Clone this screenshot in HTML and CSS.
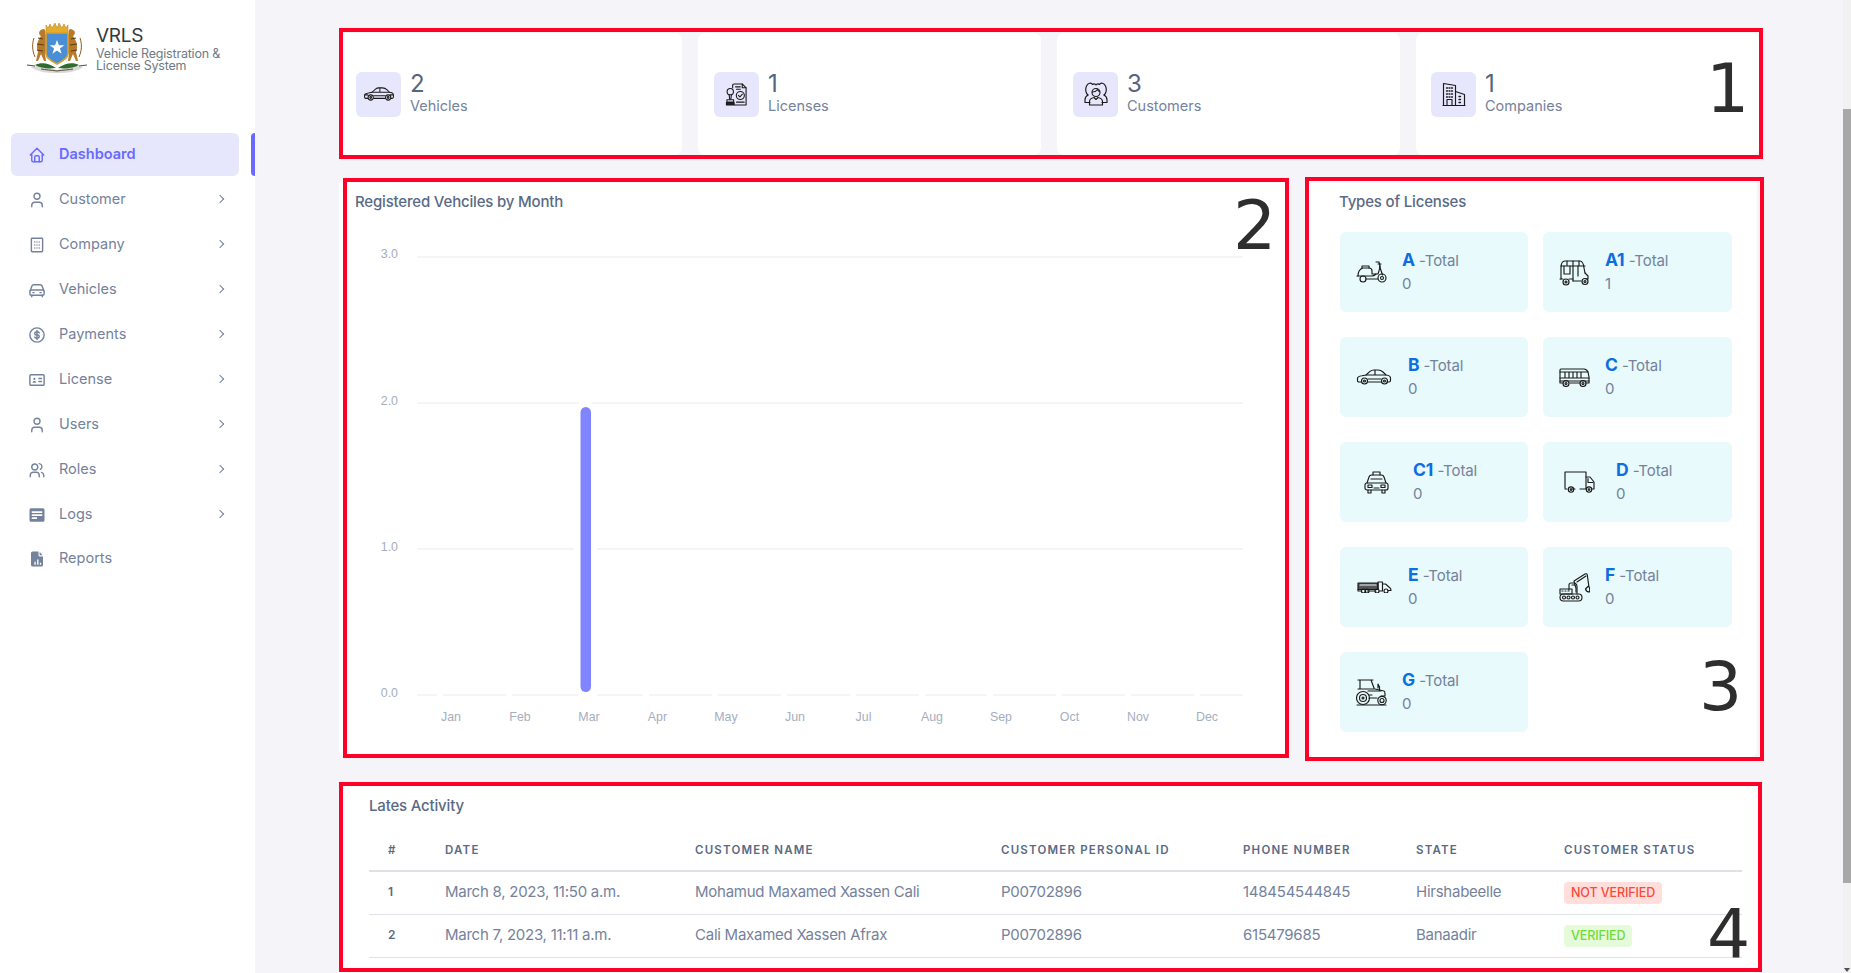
FILE: index.html
```html
<!DOCTYPE html>
<html lang="en">
<head>
<meta charset="utf-8">
<title>VRLS Dashboard</title>
<link rel="stylesheet" href="styles.css">
</head>
<body>
<div class="app">
  <aside class="sidebar">
    <div class="brand">
      <svg class="crest" viewBox="0 0 60 52" width="60" height="52">
        <path d="M4 45c8-3 16 1 26 3c10-2 18-6 26-3c-6 5-16 6-26 6s-20-1-26-6z" fill="#d9d9d6"/>
        <path d="M8 43c6-3 14-2 21 3c-8 1-16 0-21-3zM52 43c-6-3-14-2-21 3c8 1 16 0 21-3z" fill="#2f6b2c"/>
        <path d="M0 43l8 1M60 43l-8 1M14 47c5 1 10 1 16 2c6-1 11-1 16-2" stroke="#5a4a3a" stroke-width="1" fill="none"/>
        <path d="M14 14c-3-2-2-5 0-6l2-1c2 0 3 2 2 4c2 3 2 8 1 12c2 2 1 6-1 9l1 7h-2l-3-7l-3 7H9l2-9c-2-5-1-11 3-16z" fill="#b77a2a"/>
        <path d="M46 14c3-2 2-5 0-6l-2-1c-2 0-3 2-2 4c-2 3-2 8-1 12c-2 2-1 6 1 9l-1 7h2l3-7l3 7h2l-2-9c2-5 1-11-3-16z" fill="#b77a2a"/>
        <path d="M11 16l5 1M10 22l7 1M10 28l6 1M49 16l-5 1M50 22l-7 1M50 28l-6 1" stroke="#5b3a14" stroke-width="1"/>
        <path d="M7 16c-2 6-2 12 1 19M53 16c2 6 2 12-1 19" stroke="#8a5a1e" stroke-width="1" fill="none"/>
        <path d="M19 3l2 3l2-4l2 4l3-5l2 5l2-5l3 5l2-4l2 4l2-3v8H19z" fill="#e5ad2e" stroke="#b07d18" stroke-width=".5"/>
        <path d="M19 11h22v21c0 4-5 7-11 10c-6-3-11-6-11-10z" fill="#4a8fd6" stroke="#dca12a" stroke-width="1.6"/>
        <path d="M30 18l1.900 5.200h5.400l-4.400 3.200l1.700 5.300l-4.600-3.200l-4.600 3.200l1.700-5.300l-4.400-3.200h5.400z" fill="#fff"/>
      </svg>
      <div class="brand-text">
        <div class="brand-name">VRLS</div>
        <div class="brand-sub">Vehicle Registration &amp;<br>License System</div>
      </div>
    </div>
    <nav class="nav">
      <a class="nav-item is-active">
        <svg class="nav-icon" viewBox="0 0 24 24"><path d="M5 12H3l9-9l9 9h-2"/><path d="M5 12v7a2 2 0 0 0 2 2h10a2 2 0 0 0 2-2v-7"/><path d="M9 21v-6a2 2 0 0 1 2-2h2a2 2 0 0 1 2 2v6"/></svg>
        <span>Dashboard</span>
      </a>
      <a class="nav-item">
        <svg class="nav-icon" viewBox="0 0 24 24"><circle cx="12" cy="7" r="4"/><path d="M5 21v-2a4 4 0 0 1 4-4h6a4 4 0 0 1 4 4v2" /></svg>
        <span>Customer</span><i class="chev"></i>
      </a>
      <a class="nav-item">
        <svg class="nav-icon" viewBox="0 0 24 24"><rect x="4.500" y="3" width="15" height="18" rx="1"/><path d="M9 8h.01M12 8h.01M15 8h.01M9 12h.01M12 12h.01M15 12h.01M9 16h.01M12 16h.01M15 16h.01"/></svg>
        <span>Company</span><i class="chev"></i>
      </a>
      <a class="nav-item">
        <svg class="nav-icon" viewBox="0 0 24 24"><path d="M3 13l2.200-6.200A2.500 2.500 0 0 1 7.600 5h8.800a2.500 2.500 0 0 1 2.400 1.800L21 13"/><rect x="2.500" y="12" width="19" height="7" rx="2"/><path d="M5 19v2M19 19v2M6.500 15.500h1.500M16 15.500h1.500"/></svg>
        <span>Vehicles</span><i class="chev"></i>
      </a>
      <a class="nav-item">
        <svg class="nav-icon" viewBox="0 0 24 24"><circle cx="12" cy="12" r="9.500"/><path d="M15 9.200A2.200 2.200 0 0 0 13 8h-2a2 2 0 0 0 0 4h2a2 2 0 0 1 0 4h-2a2.200 2.200 0 0 1-2-1.200M12 6v12"/></svg>
        <span>Payments</span><i class="chev"></i>
      </a>
      <a class="nav-item">
        <svg class="nav-icon" viewBox="0 0 24 24"><rect x="2.500" y="5" width="19" height="14" rx="1.500"/><circle cx="8.500" cy="10.500" r="1.400" class="solid"/><path d="M6 15.500c.3-1.600 1.300-2.200 2.500-2.200s2.200.6 2.500 2.200z" class="solid"/><path d="M14.500 10h3.500M14.500 14h3.500"/></svg>
        <span>License</span><i class="chev"></i>
      </a>
      <a class="nav-item">
        <svg class="nav-icon" viewBox="0 0 24 24"><circle cx="12" cy="7" r="4"/><path d="M5 21v-2a4 4 0 0 1 4-4h6a4 4 0 0 1 4 4v2"/></svg>
        <span>Users</span><i class="chev"></i>
      </a>
      <a class="nav-item">
        <svg class="nav-icon" viewBox="0 0 24 24"><circle cx="9" cy="8" r="4"/><path d="M3 21v-2a4 4 0 0 1 4-4h4a4 4 0 0 1 4 4v2M15 3.500a4 4 0 0 1 1.500 7.500M21 21v-2a4 4 0 0 0-3-3.800"/></svg>
        <span>Roles</span><i class="chev"></i>
      </a>
      <a class="nav-item">
        <svg class="nav-icon nav-icon-fill" viewBox="0 0 24 24"><path d="M4 3h16a2 2 0 0 1 2 2v14a2 2 0 0 1-2 2H4a2 2 0 0 1-2-2V5a2 2 0 0 1 2-2zm1 4v2.200h14V7zm0 4v2.200h14V11zm0 4v2.200h7V15z" fill-rule="evenodd"/></svg>
        <span>Logs</span><i class="chev"></i>
      </a>
      <a class="nav-item nav-item-last">
        <svg class="nav-icon nav-icon-fill" viewBox="0 0 24 24"><path d="M6 2h8v5a1.500 1.500 0 0 0 1.500 1.500H20V20a2 2 0 0 1-2 2H6a2 2 0 0 1-2-2V4a2 2 0 0 1 2-2zm2.500 17.500h1.800v-4H8.500zm3.700 0H14v-7h-1.800zm3.600 0h1.800v-2.500h-1.800zM15.500 2.500L19.500 7h-4z" fill-rule="evenodd"/></svg>
        <span>Reports</span>
      </a>
    </nav>
  </aside>

  <main class="main">
    <section class="stats">
      <div class="stat">
        <div class="stat-icon">
          <svg class="line" viewBox="0 0 36 16" width="32" height="14"><path d="M5 13H3c-1 0-1.500-.5-1.500-1.500V9.500C1.500 8 3 7.200 6 6.800l4-.8l4-3.600C15 1.500 16.500 1 18 1h4c2 0 3.500.6 5 2l3 3c3 .3 4.500 1.300 4.500 3v2.500c0 1-.5 1.500-1.500 1.500h-2"/><path d="M12 10h13M12 13h13M10 6h20M19 1.200V6M2 9h3M31 9h3"/><circle cx="8.500" cy="12" r="3"/><circle cx="28.500" cy="12" r="3"/><circle cx="8.500" cy="12" r="1"/><circle cx="28.500" cy="12" r="1"/></svg>
        </div>
        <div class="stat-text"><div class="stat-num">2</div><div class="stat-label">Vehicles</div></div>
      </div>
      <div class="stat">
        <div class="stat-icon">
          <svg class="line" viewBox="0 0 24 26" width="23" height="25"><path d="M8 6V3.500C8 2.700 8.500 2 9.500 2H18l4 4v18H10"/><path d="M18 2v4h4M11 5h5M12 7.500h4"/><circle cx="16" cy="14" r="4.200"/><path d="M14 14l1.500 1.600l2.600-3"/><circle cx="5.500" cy="10" r="3.300"/><path d="M4.300 13l.6 5M6.700 13l-.6 5"/><path d="M2 18.500h7v2.500H2z"/><path d="M1.500 21.500h8v2.500h-8z" fill="#222"/><path d="M12 21h8"/></svg>
        </div>
        <div class="stat-text"><div class="stat-num">1</div><div class="stat-label">Licenses</div></div>
      </div>
      <div class="stat">
        <div class="stat-icon">
          <svg class="line" viewBox="0 0 26 26" width="26" height="26"><path d="M5 14C2.500 12 2 8 3.500 5S8 1 9.500 3.500C10.500 2.500 12 2.500 13 4c1-1.500 2.500-1.500 3.500-.5C18 1 21 2 22.500 5s1 7-1.500 9"/><circle cx="13" cy="11.500" r="4"/><path d="M9.500 11c2 0 4-1 5-2.500c.5 1 1.500 2 2 2"/><path d="M5 14c-2 1-3 2.500-3 5v2.500h5M21 14c2 1 3 2.500 3 5v2.500h-5"/><path d="M6.500 24v-3.500c0-2.500 2-3.500 4.500-4l2 2l2-2c2.500.5 4.500 1.500 4.500 4V24z"/></svg>
        </div>
        <div class="stat-text"><div class="stat-num">3</div><div class="stat-label">Customers</div></div>
      </div>
      <div class="stat">
        <div class="stat-icon">
          <svg class="line" viewBox="0 0 24 24" width="24" height="24"><path d="M1.500 23.500V1.500l12 2v20z"/><path d="M13.500 9.500l9 3v11h-9"/><path d="M1 23.500h22M5 23.500v-6h5v6"/><path d="M4.500 6h1M7 6h1M9.500 6h1M4.500 9h1M7 9h1M9.500 9h1M4.500 12h1M7 12h1M9.500 12h1M4.500 15h1M7 15h1M9.500 15h1M17 14.500h1.500M17 17.500h1.500M17 20.500h1.500" stroke-width="1.300"/></svg>
        </div>
        <div class="stat-text"><div class="stat-num">1</div><div class="stat-label">Companies</div></div>
      </div>
    </section>

    <section class="middle">
      <div class="panel chart-panel">
        <h2 class="panel-title">Registered Vehciles by Month</h2>
        <svg class="chart" viewBox="339 222 948 520" width="948" height="520">
          <g class="grid">
            <line x1="417" x2="1243" y1="257" y2="257"/>
            <line x1="417" x2="1243" y1="403" y2="403"/>
            <line x1="417" x2="1243" y1="549" y2="549"/>
            <line x1="417" x2="1243" y1="695" y2="695"/>
          </g>
          <g class="gaps">
            <rect x="437" y="693" width="6" height="4"/><rect x="506" y="693" width="6" height="4"/>
            <rect x="643" y="693" width="6" height="4"/><rect x="712" y="693" width="6" height="4"/>
            <rect x="781" y="693" width="6" height="4"/><rect x="850" y="693" width="6" height="4"/>
            <rect x="919" y="693" width="6" height="4"/><rect x="987" y="693" width="6" height="4"/>
            <rect x="1056" y="693" width="6" height="4"/><rect x="1125" y="693" width="6" height="4"/>
            <rect x="1194" y="693" width="6" height="4"/>
            <rect x="578" y="693" width="19" height="4"/><rect x="574" y="547" width="23" height="4"/>
            <rect x="579" y="401" width="13" height="4"/>
          </g>
          <rect class="bar" x="580.500" y="407" width="10.500" height="285" rx="5.250"/>
          <g class="y-labels">
            <text x="398" y="258">3.0</text>
            <text x="398" y="405">2.0</text>
            <text x="398" y="551">1.0</text>
            <text x="398" y="697">0.0</text>
          </g>
          <g class="x-labels">
            <text x="451" y="721">Jan</text><text x="520" y="721">Feb</text><text x="589" y="721">Mar</text>
            <text x="657.500" y="721">Apr</text><text x="726" y="721">May</text><text x="795" y="721">Jun</text>
            <text x="863.500" y="721">Jul</text><text x="932" y="721">Aug</text><text x="1001" y="721">Sep</text>
            <text x="1069.500" y="721">Oct</text><text x="1138" y="721">Nov</text><text x="1207" y="721">Dec</text>
          </g>
        </svg>
      </div>

      <div class="panel types-panel">
        <h2 class="panel-title">Types of Licenses</h2>
        <div class="tiles">
          <div class="tile">
            <div class="slot s31"><svg class="line" viewBox="0 0 31 22" width="31" height="22"><path d="M20 1h3l1 4M22 3h3M23.500 5l3 9"/><path d="M2 15c0-4 1.500-7 5-8h6c2 0 3 1 3 3v3h6c1-3 2-6 2-8"/><path d="M6 7V5h7v2M1 15h15c1.500 0 3-1 4-2"/><circle cx="7" cy="18" r="3"/><circle cx="26" cy="17" r="4"/><circle cx="26" cy="17" r="1.500"/><path d="M10 18h12"/></svg></div>
            <div class="tile-text"><div class="tile-head"><b>A</b> -Total</div><div class="tile-val">0</div></div>
          </div>
          <div class="tile">
            <div class="slot s31"><svg class="line" viewBox="0 0 31 27" width="31" height="27"><path d="M2 20V9c0-4 1-7 4-7h15c2.500 0 3.500 2.500 4 7l1 5"/><path d="M2 7h24M8 2v5M14 2v20M20 2v5"/><path d="M5 7v8h6V7M19 7v10"/><path d="M1 20h3M10 20h4M14 22h8M26 14l3 3v3h-2"/><circle cx="7" cy="23" r="3"/><circle cx="26" cy="22.500" r="3"/><circle cx="7" cy="23" r="1"/><circle cx="26" cy="22.500" r="1"/></svg></div>
            <div class="tile-text"><div class="tile-head"><b>A1</b> -Total</div><div class="tile-val">1</div></div>
          </div>
          <div class="tile">
            <div class="slot s36"><svg class="line" viewBox="0 0 36 16" width="36" height="16"><path d="M5 13H3c-1 0-1.500-.5-1.500-1.500V9.500C1.500 8 3 7.200 6 6.800l4-.8l4-3.600C15 1.500 16.500 1 18 1h4c2 0 3.500.6 5 2l3 3c3 .3 4.500 1.300 4.500 3v2.500c0 1-.5 1.500-1.500 1.500h-2"/><path d="M12 10h13M12 13h13M10 6h20M19 1.200V6"/><circle cx="8.500" cy="12" r="3"/><circle cx="28.500" cy="12" r="3"/><circle cx="8.500" cy="12" r="1"/><circle cx="28.500" cy="12" r="1"/></svg></div>
            <div class="tile-text"><div class="tile-head"><b>B</b> -Total</div><div class="tile-val">0</div></div>
          </div>
          <div class="tile">
            <div class="slot s31"><svg class="line" viewBox="0 0 31 19" width="31" height="19"><path d="M4 15H1V2c0-.6.4-1 1-1h23c2 0 3 1 4 3l1 5v6h-3M11 15h10"/><path d="M1 4h28M1 10h29M1 13h29M6 4v6M10 4v6M14 4v6M18 4v6M22 4v6"/><circle cx="7" cy="15.500" r="3"/><circle cx="24" cy="15.500" r="3"/><circle cx="7" cy="15.500" r="1"/><circle cx="24" cy="15.500" r="1"/></svg></div>
            <div class="tile-text"><div class="tile-head"><b>C</b> -Total</div><div class="tile-val">0</div></div>
          </div>
          <div class="tile">
            <div class="slot s41"><svg class="line" viewBox="0 0 25 23" width="25" height="23"><path d="M9 4V1h7v3"/><path d="M3 12l2-6c.4-1.200 1-2 2.500-2h10c1.500 0 2.100.8 2.500 2l2 6"/><rect x="1" y="12" width="23" height="7" rx="2"/><rect x="4" y="14" width="4" height="2.500"/><rect x="17" y="14" width="4" height="2.500"/><path d="M10 17h5M4 19v3h3v-3M18 19v3h3v-3M7 8h11"/></svg></div>
            <div class="tile-text"><div class="tile-head"><b>C1</b> -Total</div><div class="tile-val">0</div></div>
          </div>
          <div class="tile">
            <div class="slot s41"><svg class="line" viewBox="0 0 31 22" width="31" height="22"><path d="M1 17V1h21v17h-6M3 18H1M8 18h3"/><path d="M22 6h4l4 5v7h-2"/><path d="M24 7.500v4h5"/><circle cx="7" cy="18.500" r="2.700"/><circle cx="25" cy="18.500" r="2.700"/><circle cx="7" cy="18.500" r=".8"/><circle cx="25" cy="18.500" r=".8"/></svg></div>
            <div class="tile-text"><div class="tile-head"><b>D</b> -Total</div><div class="tile-val">0</div></div>
          </div>
          <div class="tile">
            <div class="slot s36"><svg class="line" viewBox="0 0 35 12" width="35" height="12"><path d="M1 2h20v6.500H1z" fill="#555"/><path d="M1 8.500v1.500h3M10 10h9M22.500 10H25M21 8.500V1h4.500v9"/><path d="M25.500 3h3l4 3.500c1 .5 1.500 1.500 1.500 3h-3"/><path d="M3 4h16" stroke="#e8fafb"/><circle cx="6.500" cy="10" r="2"/><circle cx="10" cy="10" r="2"/><circle cx="20" cy="10" r="2"/><circle cx="29" cy="10" r="2"/></svg></div>
            <div class="tile-text"><div class="tile-head"><b>E</b> -Total</div><div class="tile-val">0</div></div>
          </div>
          <div class="tile">
            <div class="slot s31"><svg class="line" viewBox="0 0 31 30" width="31" height="30"><path d="M16 13l-1-4l11-7c1-.5 2-.3 2.300 1l1.500 11"/><path d="M18 10l9-6M29.500 14l-3 3c.5 2 2 3 4 3c.5-2 .5-4-1-6z"/><path d="M10 18v-5c0-1.500 1-2 2-2h3c2 0 3 2 3 4v7"/><path d="M13 13h3l1 3v4"/><path d="M1 17h12v5H1zM3 19h1M6 19h1M9 19h1"/><rect x="1" y="22" width="22" height="7" rx="3.500"/><circle cx="5" cy="25.500" r="1.500"/><circle cx="9.500" cy="25.500" r="1.500"/><circle cx="14" cy="25.500" r="1.500"/><circle cx="18.500" cy="25.500" r="1.500"/></svg></div>
            <div class="tile-text"><div class="tile-head"><b>F</b> -Total</div><div class="tile-val">0</div></div>
          </div>
          <div class="tile">
            <div class="slot s31"><svg class="line" viewBox="0 0 31 27" width="31" height="27"><path d="M2 1h15M4 1v9M15 1l3 8M2 10h17l9 2c1 .5 1 2 1 3v2h-4"/><path d="M12 12h13M13 16h3M13 19h8M22 9V5l1.500 3v4"/><circle cx="7" cy="19" r="6.500"/><circle cx="7" cy="19" r="3.500"/><circle cx="7" cy="19" r="1"/><circle cx="26" cy="21.500" r="4.200"/><circle cx="26" cy="21.500" r="2"/><path d="M1 26h29"/></svg></div>
            <div class="tile-text"><div class="tile-head"><b>G</b> -Total</div><div class="tile-val">0</div></div>
          </div>
        </div>
      </div>
    </section>

    <section class="panel activity">
      <h2 class="panel-title">Lates Activity</h2>
      <table class="table">
        <colgroup><col class="c1"><col class="c2"><col class="c3"><col class="c4"><col class="c5"><col class="c6"><col class="c7"></colgroup>
        <thead>
          <tr><th>#</th><th>Date</th><th>Customer Name</th><th>Customer Personal ID</th><th>Phone Number</th><th>State</th><th>Customer Status</th></tr>
        </thead>
        <tbody>
          <tr><td class="idx">1</td><td>March 8, 2023, 11:50 a.m.</td><td>Mohamud Maxamed Xassen Cali</td><td>P00702896</td><td>148454544845</td><td>Hirshabeelle</td><td class="status"><span class="badge badge-no">NOT VERIFIED</span></td></tr>
          <tr><td class="idx">2</td><td>March 7, 2023, 11:11 a.m.</td><td>Cali Maxamed Xassen Afrax</td><td>P00702896</td><td>615479685</td><td>Banaadir</td><td class="status"><span class="badge badge-yes">VERIFIED</span></td></tr>
        </tbody>
      </table>
    </section>
  </main>

  <div class="scrollbar"><div class="scroll-thumb"></div><div class="scroll-arrow"></div></div>

  <div class="mark mark-1"></div>
  <div class="mark mark-2"></div>
  <div class="mark mark-3"></div>
  <div class="mark mark-4"></div>
  <div class="num num-1">1</div>
  <div class="num num-2">2</div>
  <div class="num num-3">3</div>
  <div class="num num-4">4</div>
</div>
</body>
</html>
```

FILE: styles.css
```css
* { box-sizing: border-box; }
html, body { margin: 0; padding: 0; height: 100%; overflow: hidden; }
body { font-family: Inter, "Noto Sans", "Liberation Sans", sans-serif; color: #5a6a85; background: #f4f4f9; }

.app { position: relative; display: flex; width: 1851px; height: 973px; overflow: hidden; background: #f4f4f9; }

/* sidebar */
.sidebar { flex: 0 0 255px; background: #fff; padding: 22px 16px 0 11px; }
.brand { display: flex; align-items: flex-start; gap: 9px; height: 111px; padding-left: 16px; }
.crest { flex: none; }
.brand-text { padding-top: 2px; }
.brand-name { font-size: 19px; line-height: 24px; color: #333a42; letter-spacing: -.3px; }
.brand-sub { font-size: 12.500px; line-height: 12px; color: #6f7a85; letter-spacing: -.2px; }

.nav { display: flex; flex-direction: column; gap: 2px; }
.nav-item { position: relative; display: flex; align-items: center; height: 43px; padding: 0 16px 2px 17px; border-radius: 6px; font-size: 14.500px; color: #74829c; }
.nav-item span { margin-left: 13px; flex: 1; }
.nav-item.is-active { background: #e6e6fc; color: #6a6aff; font-weight: 600; }
.nav-item.is-active::after { content: ""; position: absolute; top: 0; right: -16px; width: 4px; height: 43px; background: #6a6aff; border-radius: 4px 0 0 4px; }
.nav-item-last { margin-top: -1px; }
.nav-icon { flex: none; width: 18px; height: 18px; margin-top: 2px; fill: none; stroke: currentColor; stroke-width: 1.900; stroke-linecap: round; stroke-linejoin: round; }
.nav-icon .solid { fill: currentColor; stroke: none; }
.nav-icon-fill { fill: currentColor; stroke: none; }
.chev { width: 6px; height: 6px; border-top: 1.300px solid #74829c; border-right: 1.300px solid #74829c; transform: rotate(45deg); }

/* main */
.main { flex: 1; padding: 33px 84px 0; min-width: 0; }

.line { fill: none; stroke: #1a1a1a; stroke-width: 1.150; stroke-linecap: round; stroke-linejoin: round; display: block; }

.stats { display: grid; grid-template-columns: repeat(4, 343px); gap: 16px; height: 122px; }
.stat { display: flex; align-items: center; gap: 9px; padding: 0 16px; background: #fff; border-radius: 7px; }
.stat:first-child { padding-left: 17px; }
.stat:last-child { padding-left: 15px; }
.stat-icon { flex: none; display: flex; align-items: center; justify-content: center; width: 45px; height: 45px; border-radius: 6px; background: #e6e6fc; }
.stat-text { margin-top: -2px; }
.stat-num { padding-top: 2px; font-size: 24px; line-height: 24px; color: #55657f; }
.stat-label { font-size: 14.500px; line-height: 20px; color: #74829c; }

.panel { background: #fff; border-radius: 7px; }
.panel-title { margin: 0; font-size: 15px; line-height: 18px; font-weight: 500; color: #5a6a85; letter-spacing: -.18px; }

.middle { display: grid; grid-template-columns: 948px 452px; column-gap: 18px; height: 579px; margin-top: 23px; }
.chart-panel { padding: 15px 0 0 16px; }
.chart { display: block; margin: 11px 0 0 -16px; }
.grid line { stroke: #f1f2f4; stroke-width: 1.500; }
.gaps rect { fill: #fff; }
.bar { fill: #8085ff; }
.y-labels text { font: 12.400px "Liberation Sans", Arial, sans-serif; fill: #a5aec0; text-anchor: end; }
.x-labels text { font: 12.400px "Liberation Sans", Arial, sans-serif; fill: #a5aec0; text-anchor: middle; }

.types-panel { padding: 15px 25px 0 35px; }
.types-panel .panel-title { margin-left: -1px; }
.tiles { display: grid; grid-template-columns: 188px 189px; grid-auto-rows: 80px; column-gap: 15px; row-gap: 25px; margin-top: 21px; }
.tile { display: flex; align-items: center; padding-left: 16px; border-radius: 6px; background: #e8fafb; }
.slot { flex: none; display: flex; justify-content: center; }
.s31 { width: 31px; margin-right: 15px; }
.s36 { width: 36px; margin-right: 16px; }
.s41 { width: 41px; margin-right: 16px; }
.tile-text { margin-top: -2px; }
.tile-head { font-size: 15px; line-height: 23px; color: #74829c; letter-spacing: -.1px; white-space: nowrap; }
.tile-head b { font-size: 17.500px; font-weight: 700; color: #0d6ee0; }
.tile-val { font-size: 15px; line-height: 23px; color: #74829c; }

.activity { margin-top: 25px; padding: 15px 17px 0 30px; height: 300px; }
.table { border-collapse: collapse; table-layout: fixed; width: 1373px; margin-top: 14px; }
.c1 { width: 57px; } .c2 { width: 250px; } .c3 { width: 306px; } .c4 { width: 242px; } .c5 { width: 173px; } .c6 { width: 148px; } .c7 { width: 197px; }
.table th { height: 42px; padding: 0 0 0 19px; text-align: left; font-size: 11.500px; font-weight: 600; letter-spacing: 1.200px; text-transform: uppercase; color: #5a6a85; border-bottom: 2px solid #dee2e6; }
.table td { height: 43px; padding: 0 0 2px 19px; font-size: 15px; letter-spacing: -.25px; color: #74829c; border-bottom: 1px solid #dee2e6; white-space: nowrap; }
.table td.status { padding-bottom: 0; }
.table td.idx { font-size: 12px; font-weight: 600; letter-spacing: 0; color: #5a6a85; }
.badge { display: inline-block; height: 22px; line-height: 22px; padding: 0 7px; border-radius: 4px; font-size: 12.500px; font-weight: 500; letter-spacing: -.1px; }
.badge-no { background: #ffdedb; color: #fa4a3a; }
.badge-yes { background: #e6fbd9; color: #6fdc3c; }

/* window scrollbar */
.scrollbar { position: relative; flex: 0 0 8px; background: #f1f1f1; }
.scroll-thumb { position: absolute; left: 0; right: 0; top: 109px; height: 774px; background: #a8a8a8; }
.scroll-arrow { position: absolute; left: 1px; bottom: 1px; border: 3px solid transparent; border-top: 4px solid #505050; border-bottom: 0; }

/* annotation overlays */
.mark { position: absolute; border: 4px solid #ff0028; pointer-events: none; }
.mark-1 { left: 339px; top: 28px; width: 1424px; height: 131px; }
.mark-2 { left: 343px; top: 178px; width: 946px; height: 580px; }
.mark-3 { left: 1305px; top: 177px; width: 459px; height: 584px; }
.mark-4 { left: 339px; top: 782px; width: 1423px; height: 190px; }
.num { position: absolute; font-family: "DejaVu Sans", sans-serif; font-size: 68px; line-height: 80px; color: #2e2e2e; }
.num-1 { left: 1706px; top: 49px; }
.num-2 { left: 1233px; top: 186px; }
.num-3 { left: 1699px; top: 647px; }
.num-4 { left: 1707px; top: 895px; }
```
